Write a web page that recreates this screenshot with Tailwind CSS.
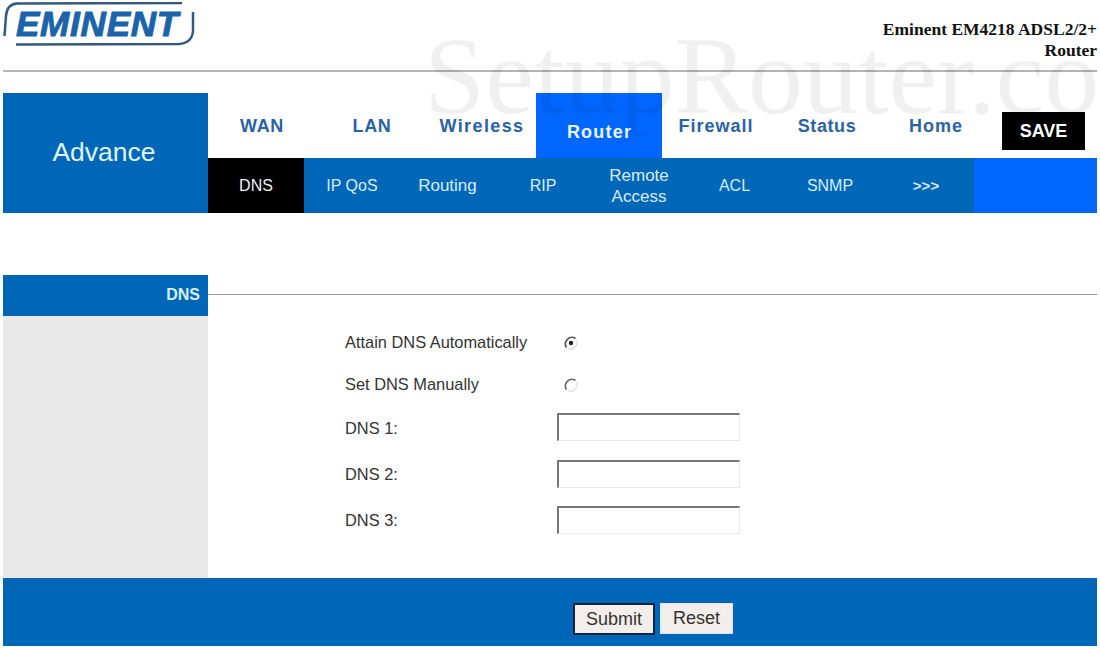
<!DOCTYPE html>
<html lang="en">
<head>
  <meta charset="UTF-8">
  <meta name="viewport" content="width=device-width, initial-scale=1.0">
  <title>Eminent EM4218 - DNS</title>
  <script src="https://cdn.jsdelivr.net/npm/@tailwindcss/browser@4"></script>
</head>
<body class="relative bg-white w-[1100px] h-[648px] overflow-hidden font-['Liberation_Sans',Arial,sans-serif]">
  <div class="px-[3px]">
    <!-- header -->
    <div class="h-[72px] border-b-2 border-[#b4b4b4] flex justify-between">
      <div class="relative w-[192px] h-[44px] mt-[2px] flex items-center justify-center">
        <svg class="absolute left-0 top-0" width="192" height="44" viewBox="0 0 192 44" fill="none" stroke="#34587e" stroke-width="2.500">
          <path d="M1.500 34 L3 14 Q4 2 14 1.500 L179 1"/>
          <path d="M190 10 L190 29 Q189 41 176 42 L13 42.500"/>
        </svg>
        <span class="italic font-bold text-[35px] leading-none text-[#1b63ab] tracking-[0.8px] pb-[2px] pr-[3px] [-webkit-text-stroke:1px_#1b63ab]">EMINENT</span>
      </div>
      <div class="w-[240px] pt-[19px] text-right font-['Liberation_Serif',serif] font-bold text-[17.500px] leading-[21px] text-[#111]">
        Eminent EM4218 ADSL2/2+<br>Router
      </div>
    </div>

    <!-- nav -->
    <div class="flex mt-[21px] h-[120px]">
      <div class="w-[205px] bg-[#0066b8] flex items-center justify-center pr-[3px] text-[#dff6ff] text-[26.500px]">Advance</div>
      <div class="flex-1 flex flex-col">
        <div class="h-[65px] flex font-bold text-[18px] tracking-[0.6px] text-[#2b62a3]">
          <div class="w-[108px] flex items-center justify-center pt-[2px]">WAN</div>
          <div class="w-[112px] flex items-center justify-center pt-[2px]">LAN</div>
          <div class="w-[108px] flex items-center justify-center pt-[2px] tracking-[1.400px]">Wireless</div>
          <div class="w-[126px] bg-[#0066ff] text-[#e8f6ff] flex items-center justify-center pt-[14px] pl-[1px] tracking-[1.200px]">Router</div>
          <div class="w-[108px] flex items-center justify-center pt-[2px] tracking-[1px]">Firewall</div>
          <div class="w-[114px] flex items-center justify-center pt-[2px]">Status</div>
          <div class="w-[104px] flex items-center justify-center pt-[2px] tracking-[1px]">Home</div>
          <div class="w-[83px] h-[38px] mt-[19px] ml-[14px] bg-black text-white tracking-normal flex items-center justify-center">SAVE</div>
        </div>
        <div class="h-[55px] flex bg-[#0066ff] text-[16px] leading-[21px] text-[#d5ecf8]">
          <div class="w-[96px] bg-black text-[#f0f0f0] flex items-center justify-center">DNS</div>
          <div class="w-[96px] bg-[#0066b8] flex items-center justify-center">IP QoS</div>
          <div class="w-[95px] bg-[#0066b8] flex items-center justify-center text-[17px]">Routing</div>
          <div class="w-[96px] bg-[#0066b8] flex items-center justify-center">RIP</div>
          <div class="w-[96px] bg-[#0066b8] flex items-center justify-center text-center text-[17px]">Remote<br>Access</div>
          <div class="w-[95px] bg-[#0066b8] flex items-center justify-center">ACL</div>
          <div class="w-[96px] bg-[#0066b8] flex items-center justify-center">SNMP</div>
          <div class="w-[96px] bg-[#0066b8] flex items-center justify-center font-bold text-[15px]">&gt;&gt;&gt;</div>
        </div>
      </div>
    </div>

    <!-- section heading -->
    <div class="flex mt-[62px] h-[41px]">
      <div class="w-[205px] bg-[#0066b8] text-[#d5f0fb] font-bold text-[16px] text-right pr-[8px] pt-[11px] leading-[18px]">DNS</div>
      <div class="flex-1 h-[1px] mt-[19px] bg-[#9a9a9a]"></div>
    </div>

    <!-- form -->
    <div class="flex h-[262px]">
      <div class="w-[205px] bg-[#e9e9e9]"></div>
      <div class="flex-1 pl-[137px] pt-[9px] text-[16.400px] text-[#333]">
        <div class="flex items-center h-[34px]">
          <span class="w-[212px]">Attain DNS Automatically</span>
          <svg class="ml-[6px] mt-[2px]" width="16" height="16" viewBox="0 0 16 16" fill="none">
            <path d="M3.500 12.500 A6.500 6.500 0 0 1 12.500 3.500" stroke="#555" stroke-width="1.600"/>
            <path d="M13.500 5 A6.500 6.500 0 0 1 5 13.500" stroke="#dcdcdc" stroke-width="1.200"/>
            <circle cx="8" cy="8" r="2.200" fill="#222"/>
          </svg>
        </div>
        <div class="flex items-center h-[34px] mt-[8px]">
          <span class="w-[212px]">Set DNS Manually</span>
          <svg class="ml-[6px] mt-[2px]" width="16" height="16" viewBox="0 0 16 16" fill="none">
            <path d="M3.500 12.500 A6.500 6.500 0 0 1 12.500 3.500" stroke="#666" stroke-width="1.600"/>
            <path d="M13.500 5 A6.500 6.500 0 0 1 5 13.500" stroke="#dcdcdc" stroke-width="1.200"/>
          </svg>
        </div>
        <div class="flex items-center h-[28px] mt-[12px]">
          <span class="w-[212px] pt-[2px]">DNS 1:</span>
          <input type="text" class="w-[183px] h-[28px] border-t-2 border-l-2 border-r border-b border-t-[#777] border-l-[#777] border-r-[#e8e8e8] border-b-[#e8e8e8] bg-white">
        </div>
        <div class="flex items-center h-[28px] mt-[19px]">
          <span class="w-[212px]">DNS 2:</span>
          <input type="text" class="w-[183px] h-[28px] border-t-2 border-l-2 border-r border-b border-t-[#777] border-l-[#777] border-r-[#e8e8e8] border-b-[#e8e8e8] bg-white">
        </div>
        <div class="flex items-center h-[28px] mt-[18px]">
          <span class="w-[212px]">DNS 3:</span>
          <input type="text" class="w-[183px] h-[28px] border-t-2 border-l-2 border-r border-b border-t-[#777] border-l-[#777] border-r-[#e8e8e8] border-b-[#e8e8e8] bg-white">
        </div>
      </div>
    </div>

    <!-- footer -->
    <div class="h-[68px] bg-[#0066b8] flex items-start pl-[570px] pt-[25px] gap-[5px] text-[18px] text-[#333]">
      <button class="w-[82px] h-[32px] bg-[#f3eeea] border-2 border-[#10263f]">Submit</button>
      <button class="w-[73px] h-[31px] bg-[#f3eeea] border border-[#d8e4ee]">Reset</button>
    </div>
  </div>

  <!-- watermark -->
  <div class="absolute left-[424px] top-[11px] w-[676px] overflow-hidden pointer-events-none font-['Liberation_Serif',serif] text-[110px] leading-[130px] whitespace-nowrap text-black/[0.06]">SetupRouter.co</div>
</body>
</html>
